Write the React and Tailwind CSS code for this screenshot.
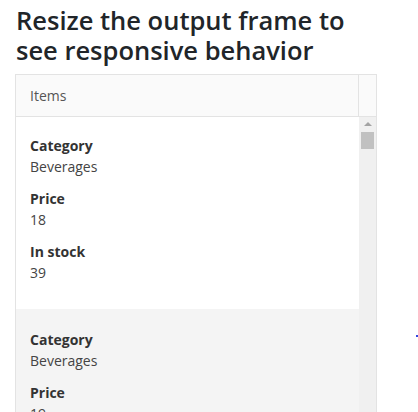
import React from "react";

const rows = [
  { category: "Beverages", price: 18, stock: 39 },
  { category: "Beverages", price: 19, stock: 17 },
];

function Field({ label, value, last }) {
  return (
    <div className={last ? "" : "mb-[11px]"}>
      <div className="font-bold text-[14px] leading-[21px] text-[#333]">{label}</div>
      <div className="text-[14px] leading-[21px] text-[#444]">{value}</div>
    </div>
  );
}

export default function App() {
  return (
    <div
      className="w-[418px] h-[412px] overflow-hidden bg-white relative"
      style={{ fontFamily: '"Open Sans", "Noto Sans", sans-serif' }}
    >
      <h1 className="ml-[16px] w-[345px] pt-[5px] text-[25.5px] leading-[30px] font-semibold text-[#212529]">
        Resize the output frame to see responsive behavior
      </h1>
      <div className="ml-[15px] mt-[9px] w-[362px] border border-[#e3e3e3] flex flex-col">
        <div className="flex h-[42px] bg-[#fafafa] border-b border-[#e3e3e3]">
          <div className="flex-1 flex items-center pl-[14px] text-[14px] text-[#555] border-r border-[#e3e3e3]">
            Items
          </div>
          <div className="w-[17px]" />
        </div>
        <div className="flex">
          <div className="flex-1 flex flex-col">
            {rows.map((r, i) => (
              <div
                key={i}
                className={
                  (i % 2 === 1 ? "bg-[#f4f4f4] pt-[20px] " : "bg-white pt-[18px] ") +
                  "pl-[14px] pb-[26px]"
                }
              >
                <Field label="Category" value={r.category} />
                <Field label="Price" value={r.price} />
                <Field label="In stock" value={r.stock} last />
              </div>
            ))}
          </div>
          <div className="w-[17px] bg-[#f0f0f0] flex flex-col items-center pt-[5px]">
            <div className="w-0 h-0 border-l-[4px] border-r-[4px] border-b-[4px] border-l-transparent border-r-transparent border-b-[#a3a3a3]" />
            <div className="mt-[6px] w-[13px] h-[17px] bg-[#c1c1c1]" />
          </div>
        </div>
      </div>
      <div className="absolute left-[416px] top-[335px] w-[2px] h-[2px] bg-[#3344dd]" />
    </div>
  );
}
